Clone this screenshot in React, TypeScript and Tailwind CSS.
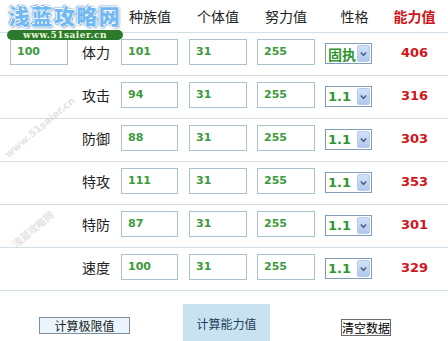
import React from "react";

interface StatRow {
  name: string;
  base: string;
  iv: string;
  ev: string;
  nature: string;
  value: number;
}

const rows: StatRow[] = [
  { name: "体力", base: "101", iv: "31", ev: "255", nature: "固执", value: 406 },
  { name: "攻击", base: "94", iv: "31", ev: "255", nature: "1.1", value: 316 },
  { name: "防御", base: "88", iv: "31", ev: "255", nature: "1.1", value: 303 },
  { name: "特攻", base: "111", iv: "31", ev: "255", nature: "1.1", value: 353 },
  { name: "特防", base: "87", iv: "31", ev: "255", nature: "1.1", value: 301 },
  { name: "速度", base: "100", iv: "31", ev: "255", nature: "1.1", value: 329 },
];

// faint diagonal watermarks, kept to the empty left column
const marks = [
  { text: "www.51saier.cn", x: 6, y: 148 },
  { text: "浅蓝攻略网", x: 14, y: 238 },
];

const cols = "grid grid-cols-[71px_41px_68px_68px_68px_65px_59px] px-[4px]";
const cjk = "font-['Noto_Sans_CJK_SC',sans-serif]";
const num = "font-['DejaVu_Sans','Noto_Sans_CJK_SC',sans-serif]";

const NumBox: React.FC<{ value: string; width: string }> = ({ value, width }) => (
  <div
    className={`${width} h-[26px] border border-[#aac2cc] bg-white flex items-center pl-[6px] text-[11px] font-bold text-[#3c9a3c] ${num}`}
  >
    {value}
  </div>
);

const NatureSelect: React.FC<{ value: string }> = ({ value }) => (
  <div className="w-[47px] h-[21px] border border-[#7f9db9] bg-white flex items-center">
    <span
      className={`flex-1 min-w-0 whitespace-nowrap pl-[2px] font-bold text-[#2f962f] ${
        value === "固执" ? `text-[14px] leading-none ${cjk}` : `text-[13px] ${num}`
      }`}
    >
      {value}
    </span>
    <div className="w-[13px] h-[17px] shrink-0 mr-[1px] rounded-[2px] bg-gradient-to-b from-[#d2e1f8] to-[#b1c8ee] border border-[#b7cbec] flex items-center justify-center">
      <svg width="7" height="6" viewBox="0 0 7 6">
        <path d="M0.8 1.5 L3.5 4.3 L6.2 1.5" fill="none" stroke="#4d6185" strokeWidth="1.5" />
      </svg>
    </div>
  </div>
);

const App: React.FC = () => {
  return (
    <div className={`relative w-[448px] h-[341px] overflow-hidden bg-white text-[#222] ${cjk}`}>
      <div className={`${cols} h-[33px] border-b border-[#d3dfe6] items-center text-[14px]`}>
        <div />
        <div />
        <div className="pl-[5px] w-[63px] text-center">种族值</div>
        <div className="pl-[5px] w-[63px] text-center">个体值</div>
        <div className="pl-[5px] w-[63px] text-center">努力值</div>
        <div className="text-center pl-[4px]">性格</div>
        <div className="text-center font-bold text-[#d0161b]">能力值</div>
      </div>

      {rows.map((row, i) => (
        <div key={row.name} className={`${cols} h-[43px] border-b border-[#d3dfe6] items-start pt-[6px]`}>
          <div className="pl-[6px]">{i === 0 && <NumBox value="100" width="w-[58px]" />}</div>
          <div className="h-[26px] flex items-center justify-end pr-[6px] text-[14px]">{row.name}</div>
          <div className="pl-[5px]">
            <NumBox value={row.base} width="w-[57px]" />
          </div>
          <div className="pl-[5px]">
            <NumBox value={row.iv} width="w-[58px]" />
          </div>
          <div className="pl-[5px]">
            <NumBox value={row.ev} width="w-[58px]" />
          </div>
          <div className="pl-[5px] pt-[4px]">
            <NatureSelect value={row.nature} />
          </div>
          <div className={`h-[28px] flex items-center justify-center text-[13px] font-bold text-[#d0161b] ${num}`}>
            {row.value}
          </div>
        </div>
      ))}

      <div className="flex items-start h-[50px] text-[12px]">
        <button className="ml-[39px] mt-[26px] w-[91px] h-[17px] bg-[#eaf5fd] border border-[#7f8e9a] text-[#222] leading-none">
          计算极限值
        </button>
        <button className="ml-[53px] mt-[13px] w-[87px] h-[40px] bg-[#c9e2f1] text-[#23405c] leading-none">
          计算能力值
        </button>
        <button className="ml-[71px] mt-[28px] w-[50px] h-[17px] bg-white border border-[#6b6b6b] text-black leading-none">
          清空数据
        </button>
      </div>

      {marks.map((m, i) => (
        <span
          key={i}
          className={`absolute pointer-events-none whitespace-nowrap text-[10px] font-bold text-[#c8c8c8] opacity-50 rotate-[-40deg] origin-left ${num}`}
          style={{ left: m.x, top: m.y }}
        >
          {m.text}
        </span>
      ))}

      <div className="absolute left-[7px] top-0 flex flex-col items-center pointer-events-none">
        <div className="text-[21px] leading-[30px] font-black tracking-[1.5px] text-[#72b8f2] [text-shadow:1px_0_0_#fff,-1px_0_0_#fff,0_1px_0_#fff,0_-1px_0_#fff,1px_1px_2px_#1d5fa8,-1px_-1px_2px_#1d5fa8]">
          浅蓝攻略网
        </div>
        <div className="w-[116px] h-[10px] rounded-full bg-[#2c7a2c] flex items-center justify-center font-['DejaVu_Serif',serif] text-[9px] leading-none font-bold text-[#e9f7d8] tracking-[0.5px]">
          www.51saier.cn
        </div>
      </div>
    </div>
  );
};

export default App;
